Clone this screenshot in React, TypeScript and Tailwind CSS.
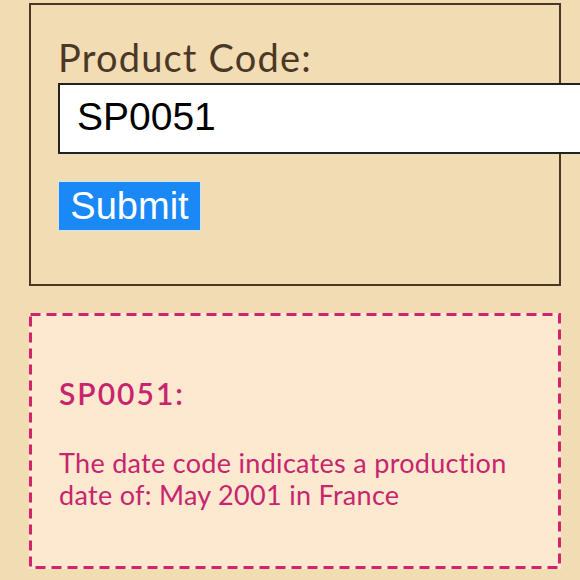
import React, { useState } from 'react';

export default function App() {
  const [code, setCode] = useState('SP0051');

  return (
    <div className="w-[580px] h-[580px] overflow-hidden bg-[#f2dcb3]">
      {/* Lookup form */}
      <form
        onSubmit={(e) => e.preventDefault()}
        className="ml-[29px] mt-[3px] w-[532px] h-[283px] border-2 border-[#4a3826] pt-[29px] pl-[27px]"
      >
        <label
          htmlFor="code"
          className="block text-[38px] leading-[46px] tracking-[1.2px] text-[#4a3826] font-['Lato','Noto_Sans',sans-serif]"
        >
          Product Code:
        </label>
        <input
          id="code"
          value={code}
          onChange={(e) => setCode(e.target.value)}
          className="block mt-[3px] w-[560px] h-[71px] border-2 border-[#222] bg-white pl-[17px] pb-[3px] text-[39px] text-black outline-none font-['Liberation_Sans',Arial,sans-serif]"
        />
        <button
          type="submit"
          className="block mt-[27px] w-[143px] h-[50px] bg-[#1a88f5] border border-[#cfe3f5] text-white text-[38px] leading-none font-['Liberation_Sans',Arial,sans-serif]"
        >
          Submit
        </button>
      </form>

      {/* Result */}
      <div className="relative ml-[29px] mt-[27px] w-[532px] h-[256px] bg-[#fde9cf] pt-[62px] pl-[30px] pr-[32px] text-[#c8246f] font-['Lato','Noto_Sans',sans-serif]">
        <svg className="absolute inset-0 pointer-events-none" width="532" height="256">
          <rect x="1.5" y="1.5" width="529" height="253" fill="none" stroke="#d0246f" strokeWidth="3" strokeDasharray="10 6" />
        </svg>
        <h2 className="text-[30px] leading-[36px] font-semibold tracking-[2px]">SP0051:</h2>
        <p className="mt-[36px] text-[27px] leading-[32px] tracking-[0.3px]">
          The date code indicates a production date of: May 2001 in France
        </p>
      </div>
    </div>
  );
}
